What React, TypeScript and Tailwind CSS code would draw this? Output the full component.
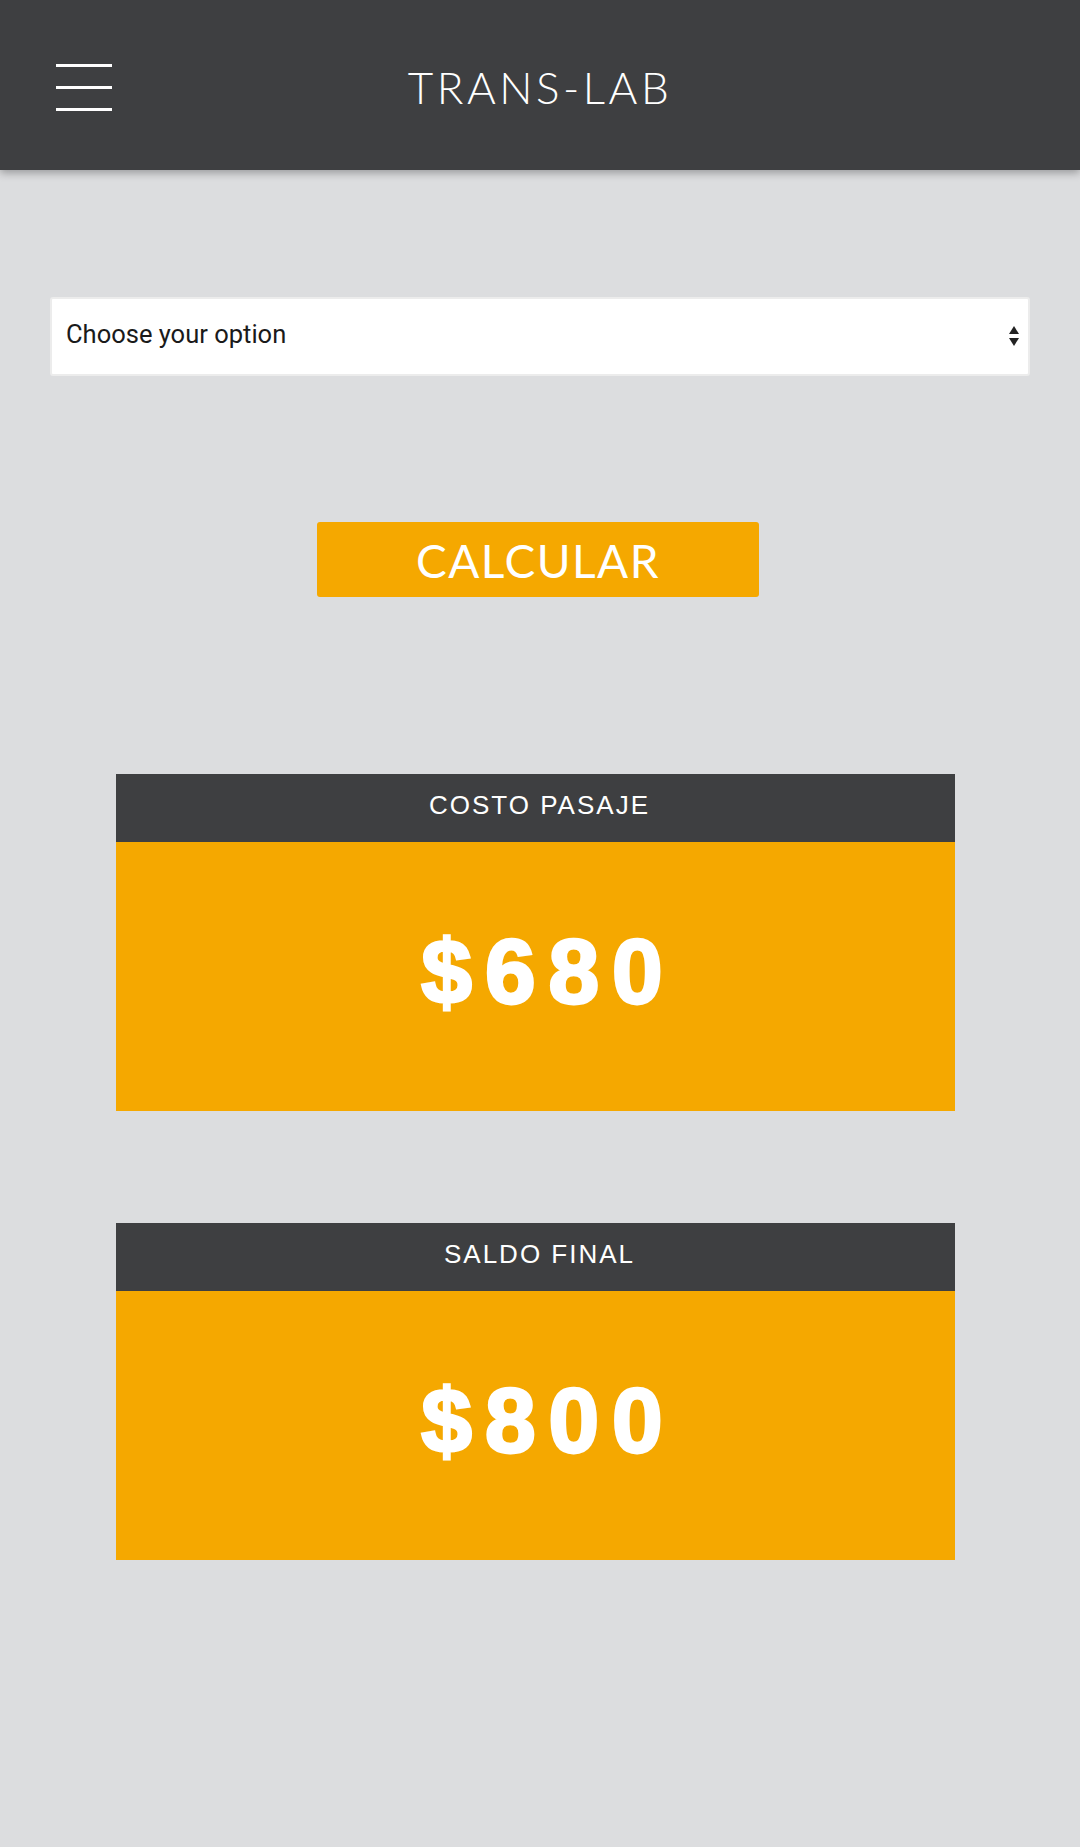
import { useState } from "react"

function Hamburger() {
  return (
    <div className="flex w-[56px] flex-col gap-[19px]">
      <span className="block h-[3px] w-full bg-white" />
      <span className="block h-[3px] w-full bg-white" />
      <span className="block h-[3px] w-full bg-white" />
    </div>
  )
}

function ResultCard({ label, value }: { label: string; value: string }) {
  return (
    <div className="ml-[116px] w-[839px]">
      <div className="flex h-[68px] items-center justify-center bg-[#3e3f41] pb-[6px] pl-[8px]">
        <span className="font-['Liberation_Sans',Arial,sans-serif] text-[26px] tracking-[2px] text-white">
          {value === "" ? "" : label}
        </span>
      </div>
      <div className="flex h-[269px] items-center justify-center bg-[#f5a800] pb-[8px] pl-[26px]">
        <span className="font-['Liberation_Sans',Arial,sans-serif] text-[91px] font-bold tracking-[13px] text-white [-webkit-text-stroke:3px_white]">
          {value}
        </span>
      </div>
    </div>
  )
}

export default function App() {
  const [option, setOption] = useState("")

  return (
    <div className="min-h-[1847px] bg-[#dcdddf]">
      <header className="relative flex h-[170px] items-center justify-center bg-[#3e3f41] shadow-[0_3px_8px_rgba(0,0,0,0.3)]">
        <div className="absolute left-[56px] top-[64px]">
          <Hamburger />
        </div>
        <h1 className="mt-[4px] font-['Lato',sans-serif] text-[44px] font-light tracking-[3.5px] text-white">
          TRANS-LAB
        </h1>
      </header>

      <div className="mx-[50px] mt-[127px]">
        <div className="relative">
          <select
            value={option}
            onChange={(e) => setOption(e.target.value)}
            className="h-[79px] w-full appearance-none rounded-[3px] border-2 border-[#ececec] bg-white pb-[4px] pl-[14px] font-['Roboto',sans-serif] text-[25.5px] text-[#1a1a1a]"
          >
            <option value="">Choose your option</option>
            <option value="1">Tarjeta 1</option>
            <option value="2">Tarjeta 2</option>
          </select>
          <svg
            className="pointer-events-none absolute right-[10px] top-[27px]"
            width="12"
            height="24"
            viewBox="0 0 12 24"
          >
            <path d="M6 2 L11 10 L1 10 Z" fill="#222" />
            <path d="M1 14 L11 14 L6 22 Z" fill="#222" />
          </svg>
        </div>
      </div>

      <div className="mt-[146px] flex justify-center">
        <button className="ml-[-4px] h-[75px] w-[442px] rounded-[3px] bg-[#f5a800] pt-[2px] font-['Lato',sans-serif] text-[46px] tracking-[1.5px] text-white">
          CALCULAR
        </button>
      </div>

      <div className="mt-[177px] flex flex-col gap-[112px]">
        <ResultCard label="COSTO PASAJE" value="$680" />
        <ResultCard label="SALDO FINAL" value="$800" />
      </div>
    </div>
  )
}
